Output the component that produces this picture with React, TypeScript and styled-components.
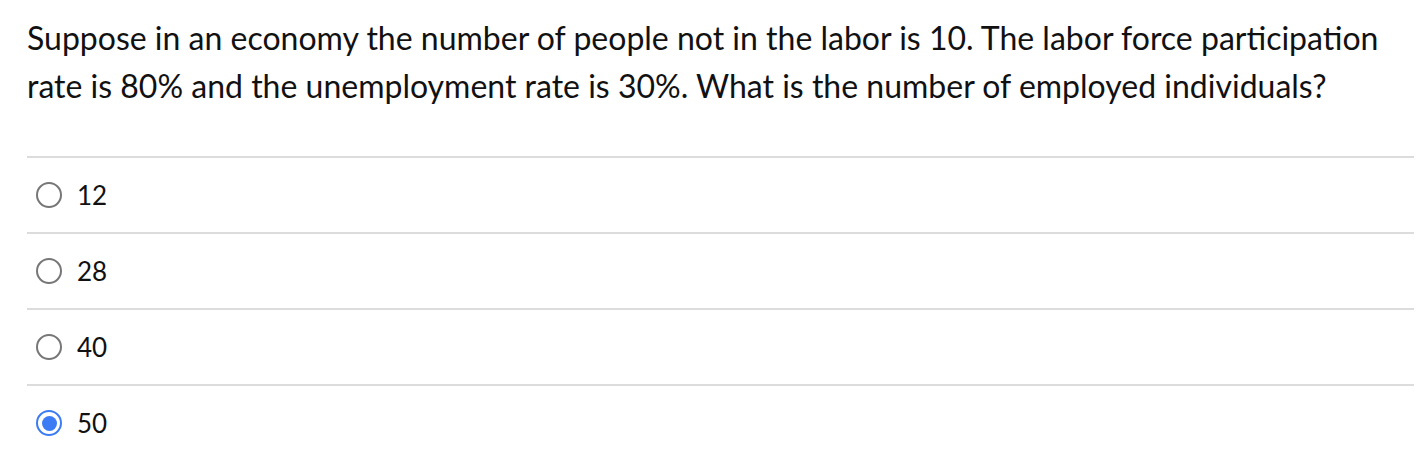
import React from "react";
import styled, { createGlobalStyle } from "styled-components";

const Global = createGlobalStyle`
  html, body { margin: 0; padding: 0; background: #fff; }
  body { font-family: Lato, "Open Sans", sans-serif; color: #000; }
`;

const Page = styled.div`
  padding: 14px 12px 0 27px;
`;

const Question = styled.p`
  margin: 0 0 46px 0;
  font-size: 32px;
  line-height: 48px;
  color: #111;
`;

const Options = styled.div`
  display: flex;
  flex-direction: column;
`;

const Option = styled.label`
  display: flex;
  align-items: center;
  gap: 15px;
  height: 76px;
  padding-left: 9px;
  border-top: 2px solid #dcdcdc;
  box-sizing: border-box;
  font-size: 26px;
  color: #111;
`;

const Radio = styled.span<{ $checked: boolean }>`
  width: 26px;
  height: 26px;
  border-radius: 50%;
  box-sizing: border-box;
  border: 2px solid ${(p) => (p.$checked ? "#3b7cf5" : "#777")};
  display: flex;
  align-items: center;
  justify-content: center;
  &::after {
    content: "";
    display: ${(p) => (p.$checked ? "block" : "none")};
    width: 15px;
    height: 15px;
    border-radius: 50%;
    background: #3b7cf5;
  }
`;

const options = [
  { v: "12", c: false },
  { v: "28", c: false },
  { v: "40", c: false },
  { v: "50", c: true },
];

export default function App() {
  return (
    <>
      <Global />
      <Page>
        <Question>
          Suppose in an economy the number of people not in the labor is 10. The labor force participation
          <br />
          rate is 80% and the unemployment rate is 30%. What is the number of employed individuals?
        </Question>
        <Options>
          {options.map((o) => (
            <Option key={o.v}>
              <Radio $checked={o.c} />
              {o.v}
            </Option>
          ))}
        </Options>
      </Page>
    </>
  );
}
